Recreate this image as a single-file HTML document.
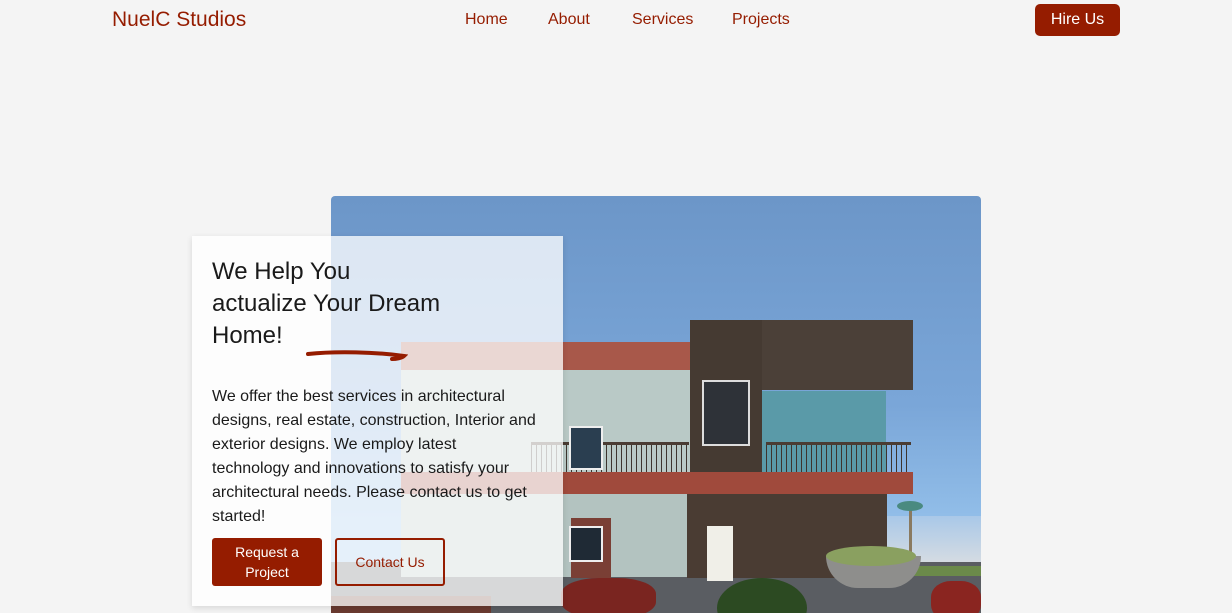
<!DOCTYPE html>
<html><head><meta charset="utf-8"><style>
*{margin:0;padding:0;box-sizing:border-box}
body{width:1232px;height:613px;overflow:hidden;background:#f4f4f4;font-family:"Liberation Sans",sans-serif;position:relative}
.a{position:absolute}
.logo{left:112px;top:8px;font-size:21px;color:#951c00;letter-spacing:0}
.nav a{position:absolute;top:11px;font-size:16px;color:#951c00;text-decoration:none}
.hire{left:1035px;top:4px;width:85px;height:32px;background:#951c00;border-radius:5px;color:#fff;font-size:16px;text-align:center;line-height:32px}
.img{left:331px;top:196px;width:650px;height:417px;border-radius:4px 4px 0 0;overflow:hidden;background:linear-gradient(#6c96c8,#7aa6d8 50%,#94c0ea 80%)}
.card{left:192px;top:236px;width:371px;height:370px;background:rgba(255,255,255,0.76);box-shadow:0 2px 6px rgba(0,0,0,0.12)}
h1{position:absolute;left:20px;top:20px;font-weight:normal;font-size:24px;line-height:32px;color:#1a1a1a;white-space:nowrap}
p.t{position:absolute;left:20px;top:149px;width:350px;font-size:16px;line-height:24px;color:#1a1a1a;white-space:nowrap}
.b1{left:20px;top:302px;width:110px;height:48px;background:#951c00;color:#fff;border-radius:3px;font-size:14px;line-height:20px;text-align:center;padding-top:4px}
.b2{left:143px;top:302px;width:110px;height:48px;border:2px solid #951c00;color:#951c00;border-radius:3px;font-size:14px;line-height:44px;text-align:center}
</style></head><body>
<div class="a logo">NuelC Studios</div>
<div class="nav"><a style="left:465px">Home</a><a style="left:548px">About</a><a style="left:632px">Services</a><a style="left:732px">Projects</a></div>
<div class="a hire">Hire Us</div>
<div class="a img">
 <div class="a" style="left:555px;top:320px;width:95px;height:50px;background:linear-gradient(#a9c8e8,#d8dde2)"></div>
 <div class="a" style="left:0;top:366px;width:650px;height:51px;background:#5a5d62"></div>
 <div class="a" style="left:560px;top:370px;width:90px;height:10px;background:#6b8a4a"></div>
 <div class="a" style="left:70px;top:170px;width:290px;height:110px;background:#b9c9c6"></div>
 <div class="a" style="left:70px;top:146px;width:290px;height:28px;background:#a8584a"></div>
 <div class="a" style="left:70px;top:296px;width:290px;height:85px;background:#b3c3c0"></div>
 <div class="a" style="left:240px;top:322px;width:40px;height:60px;background:#7a3f35"></div>
 <div class="a" style="left:356px;top:298px;width:200px;height:84px;background:#4a3c33"></div>
 <div class="a" style="left:376px;top:330px;width:26px;height:55px;background:#f0efe8"></div>
 <div class="a" style="left:430px;top:195px;width:125px;height:85px;background:#5a9aa8"></div>
 <div class="a" style="left:359px;top:124px;width:223px;height:70px;background:#4b4038"></div>
 <div class="a" style="left:359px;top:124px;width:72px;height:160px;background:#453a32"></div>
 <div class="a" style="left:371px;top:184px;width:48px;height:66px;border:2px solid #ddd;background:#2e3238"></div>
 <div class="a" style="left:435px;top:246px;width:145px;height:30px;border-top:3px solid #4a3c33;background:repeating-linear-gradient(90deg,#3d342e 0 1px,transparent 1px 5px)"></div>
 <div class="a" style="left:200px;top:246px;width:158px;height:30px;border-top:3px solid #4a3c33;background:repeating-linear-gradient(90deg,#3d342e 0 1px,transparent 1px 5px)"></div>
 <div class="a" style="left:238px;top:230px;width:34px;height:44px;border:2px solid #eee;background:#2a3e50"></div>
 <div class="a" style="left:70px;top:276px;width:512px;height:22px;background:#a04a3c"></div>
 <div class="a" style="left:238px;top:330px;width:34px;height:36px;border:2px solid #eee;background:#1f2a35"></div>
 <div class="a" style="left:578px;top:310px;width:3px;height:50px;background:#8a7a60"></div>
 <div class="a" style="left:566px;top:305px;width:26px;height:10px;border-radius:50%;background:#4a8a80"></div>
 <div class="a" style="left:495px;top:360px;width:95px;height:32px;border-radius:0 0 40px 40px;background:#8e8e8c"></div>
 <div class="a" style="left:495px;top:350px;width:90px;height:20px;border-radius:50%;background:#8aa060"></div>
 <div class="a" style="left:386px;top:382px;width:90px;height:60px;border-radius:50%;background:#2c4a22"></div>
 <div class="a" style="left:230px;top:382px;width:95px;height:40px;border-radius:40%;background:#7a2520"></div>
 <div class="a" style="left:600px;top:385px;width:50px;height:40px;border-radius:40%;background:#8a2520"></div>
 <div class="a" style="left:0;top:400px;width:160px;height:30px;background:#6a3a30"></div>
</div>
<div class="a card">
 <h1>We Help You<br>actualize Your Dream<br>Home!</h1>
 <svg class="a" style="left:114px;top:114px" width="102" height="16" viewBox="0 0 102 16"><path d="M2 4 C30 1 70 2 98 6 C96 8 90 9 86 9" fill="none" stroke="#951c00" stroke-width="4" stroke-linecap="round"/></svg>
 <p class="t">We offer the best services in architectural<br>designs, real estate, construction, Interior and<br>exterior designs. We employ latest<br>technology and innovations to satisfy your<br>architectural needs. Please contact us to get<br>started!</p>
 <div class="a b1">Request a<br>Project</div>
 <div class="a b2">Contact Us</div>
</div>
</body></html>
